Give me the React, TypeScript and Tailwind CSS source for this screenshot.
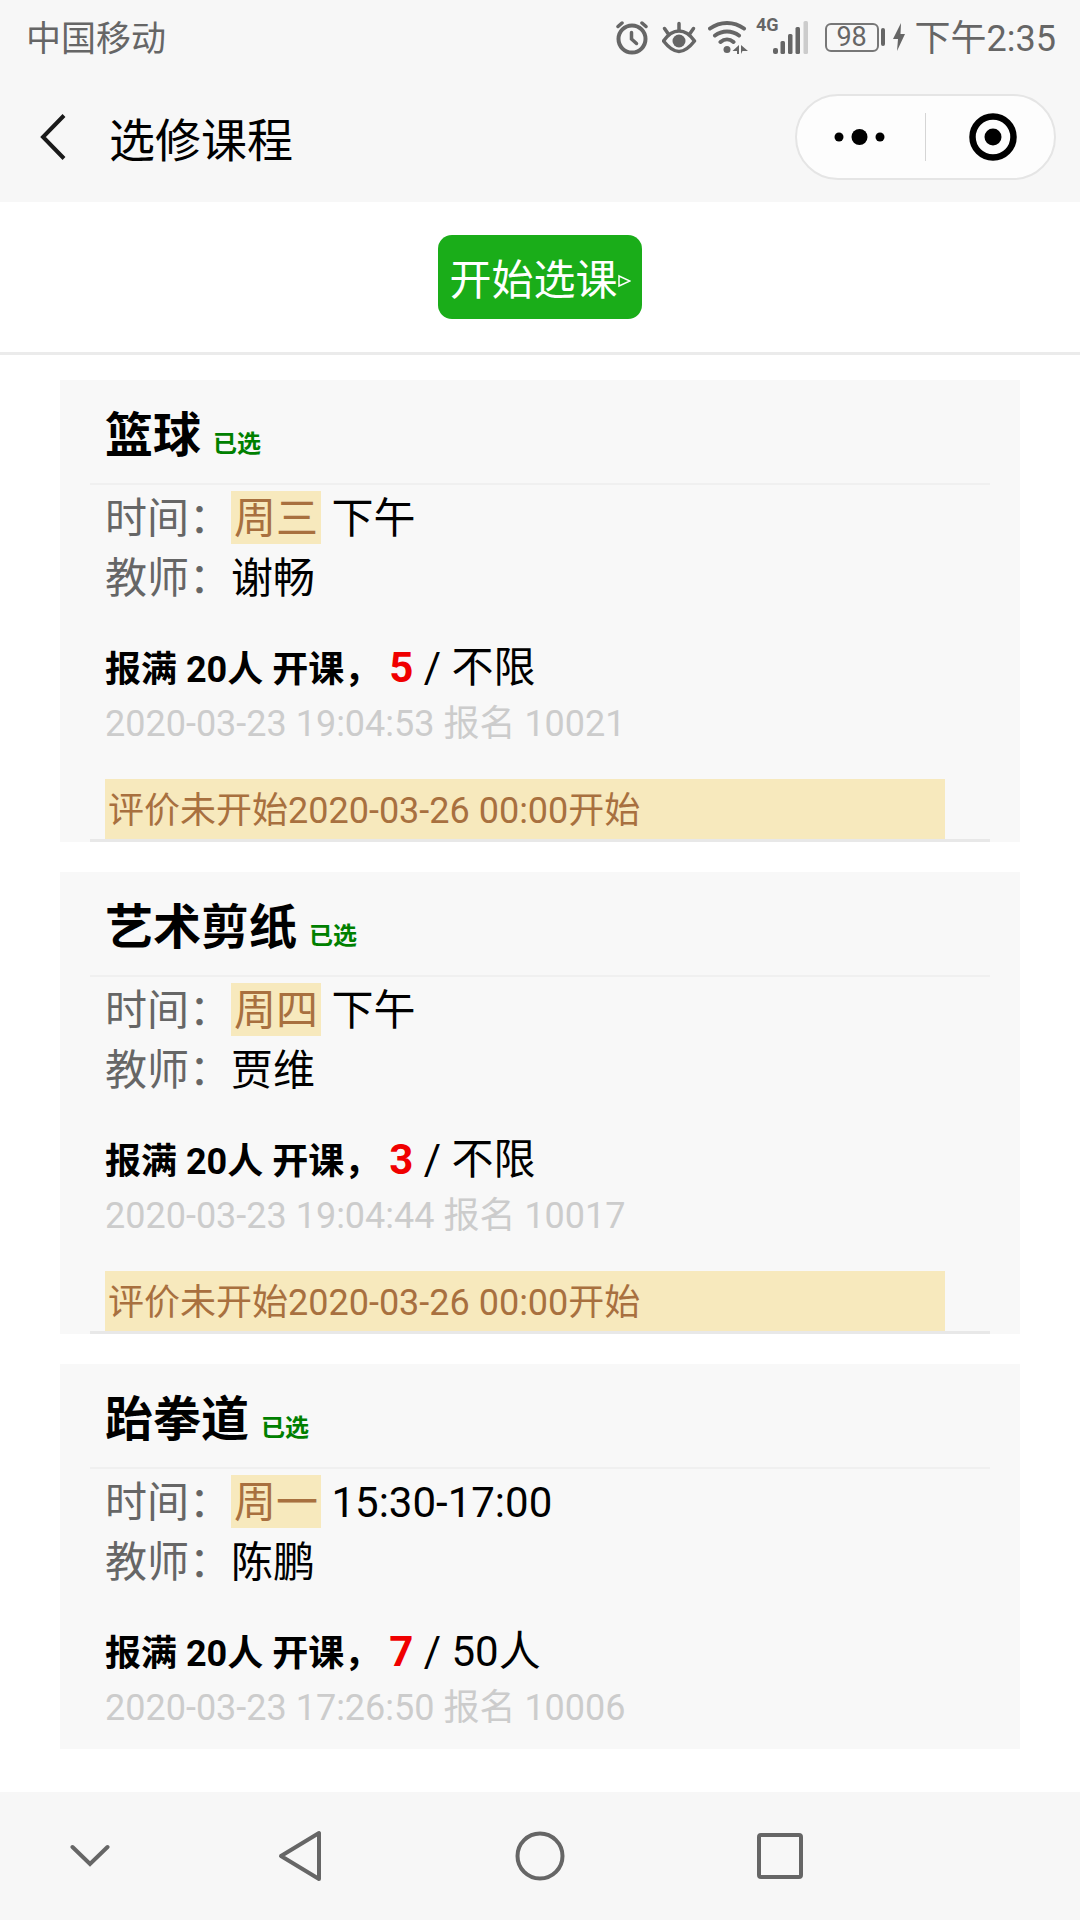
import React from 'react';

interface Course {
  name: string;
  day: string;
  time: string;
  teacher: string;
  joined: number;
  limit: string;
  signup: string;
  notice?: string;
}

const courses: Course[] = [
  {
    name: '篮球',
    day: '周三',
    time: '下午',
    teacher: '谢畅',
    joined: 5,
    limit: '不限',
    signup: '2020-03-23 19:04:53 报名 10021',
    notice: '评价未开始2020-03-26 00:00开始',
  },
  {
    name: '艺术剪纸',
    day: '周四',
    time: '下午',
    teacher: '贾维',
    joined: 3,
    limit: '不限',
    signup: '2020-03-23 19:04:44 报名 10017',
    notice: '评价未开始2020-03-26 00:00开始',
  },
  {
    name: '跆拳道',
    day: '周一',
    time: '15:30-17:00',
    teacher: '陈鹏',
    joined: 7,
    limit: '50人',
    signup: '2020-03-23 17:26:50 报名 10006',
  },
];

const StatusBar: React.FC = () => (
  <div className="flex h-[74px] items-center justify-between px-6 text-[36px] leading-[40px] text-[#666]">
    <span className="pt-1.5 pl-0.5 text-[35px]">中国移动</span>
    <div className="flex items-center">
      {/* Alarm */}
      <svg className="mr-3" width="34" height="36" viewBox="0 0 34 36" fill="none" stroke="currentColor" strokeWidth="4" strokeLinecap="round">
        <circle cx="16" cy="20" r="13.5" />
        <path d="M15.5 13.500v6.500l5 4.500" strokeWidth="3.5" />
        <path d="M2 7.500 6 4M30 7.500 26 4" strokeWidth="3.5" />
      </svg>
      {/* Eye comfort */}
      <svg className="mr-2.5" width="36" height="36" viewBox="0 0 36 36" fill="none" stroke="currentColor" strokeWidth="3.5" strokeLinecap="round">
        <path d="M1.500 22C7 14 12 12 17 12s10 2 15.500 10C27 29 22 32.500 17 32.500S7 29 1.500 22Z" strokeLinejoin="round" />
        <circle cx="17" cy="22" r="6.5" fill="currentColor" stroke="none" />
        <path d="M17 4.5V11M2.500 9.500l3.500 5M31.500 9.500l-3.500 5" />
      </svg>
      {/* Wi-Fi with data arrows */}
      <svg className="mr-2" width="40" height="36" viewBox="0 0 40 36" fill="none" stroke="currentColor" strokeWidth="4" strokeLinecap="round">
        <path d="M2 9.500C12 2 26 2 36 9.500M7 16.500c7-5.500 17-5.500 24 0M12.500 23c4-3.500 9-3.500 13 0" />
        <circle cx="19" cy="30.500" r="3.500" fill="currentColor" stroke="none" />
        <path d="M31 26v9h-2v-3h-4.500zM33 26v9l1.500-3H40z" fill="currentColor" stroke="none" />
      </svg>
      <span className="-mr-1.5 self-start text-[18px] leading-[20px] font-bold">4G</span>
      {/* Signal */}
      <svg className="mr-4" width="36" height="36" viewBox="0 0 36 36" fill="currentColor">
        <rect x="0" y="29" width="5" height="6" rx="2" />
        <rect x="7.500" y="22" width="4.500" height="13" rx="1.500" />
        <rect x="15" y="15" width="4.500" height="20" rx="1.500" />
        <rect x="22.500" y="8" width="4.500" height="27" rx="1.500" />
        <rect x="30.500" y="2" width="4.500" height="33" rx="1.500" fill="#ccc" />
      </svg>
      <span className="flex h-[29px] w-[54px] items-center justify-center rounded-[6px] border-2 border-[#777] text-[27px]">98</span>
      <span className="mr-2 ml-0.5 h-[18px] w-[4px] rounded-full bg-[#666]" />
      <svg className="mr-2.5" width="12" height="28" viewBox="0 0 12 28" fill="currentColor">
        <path d="M8 0 0 16h5L4 28l8-17H7.500z" />
      </svg>
      <span className="pt-1">下午2:35</span>
    </div>
  </div>
);

const TitleBar: React.FC = () => (
  <div className="flex h-[128px] items-center pr-6 pb-0.5 pl-8">
    <button type="button" aria-label="返回" className="flex h-16 w-[77px] items-center pl-2">
      <svg width="26" height="46" viewBox="0 0 26 46" fill="none" stroke="#1a1a1a" strokeWidth="4">
        <path d="M24 1.500 3 23l21 21.500" />
      </svg>
    </button>
    <h1 className="pt-2 text-[46px] leading-[60px]">选修课程</h1>
    {/* Mini program capsule */}
    <div className="ml-auto flex h-[86px] w-[261px] items-center rounded-full border-2 border-[#e5e5e5] bg-[#fdfdfd]">
      <button type="button" aria-label="更多" className="flex h-full flex-1 items-center justify-center">
        <svg className="mr-0.5" width="52" height="18" viewBox="0 0 52 18">
          <circle cx="5" cy="9" r="4.500" />
          <circle cx="25.500" cy="9" r="8" />
          <circle cx="46" cy="9" r="4.500" />
        </svg>
      </button>
      <span className="h-12 w-px bg-[#d5d5d5]" />
      <button type="button" aria-label="关闭" className="flex h-full flex-1 items-center justify-center">
        <svg className="ml-1.5" width="48" height="48" viewBox="0 0 48 48">
          <circle cx="24" cy="24" r="20.500" fill="none" stroke="#000" strokeWidth="6.500" />
          <circle cx="24" cy="24" r="8.500" />
        </svg>
      </button>
    </div>
  </div>
);

const CourseCard: React.FC<{ course: Course }> = ({ course }) => (
  <article className="bg-[#f8f8f8] px-[30px]">
    <header className="flex h-[105px] items-baseline gap-3 border-b-2 border-[#f0f0f0] px-[15px] pt-[23px]">
      <h2 className="text-[48px] leading-[66px] font-bold">{course.name}</h2>
      <span className="text-[24px] font-bold text-[#008000]">已选</span>
    </header>
    <div className="px-[15px] pt-1 text-[42px] leading-[60px]">
      <p>
        <span className="text-[#666]">时间：</span>
        <span className="bg-[#f7e9bd] px-[3px] pt-[3px] pb-px text-[#a8703f]">{course.day}</span> {course.time}
      </p>
      <p>
        <span className="text-[#666]">教师：</span>
        {course.teacher}
      </p>
      <p className="mt-8 leading-[54px]">
        <b className="text-[36px]">报满 20人 开课， </b>
        <b className="text-[#f00000]">{course.joined}</b> / {course.limit}
      </p>
      <p className="pb-[14px] text-[36px] leading-[54px] text-[#ccc]">{course.signup}</p>
      {course.notice && (
        <p className="mt-[14px] mr-[30px] bg-[#f7e9bd] px-[3px] pt-1 text-[36px] leading-[56px] text-[#a8703f]">{course.notice}</p>
      )}
    </div>
    {course.notice && <hr className="border-t-3 border-[#e8e8e8]" />}
  </article>
);

const SystemNav: React.FC = () => (
  <nav className="grid h-32 grid-cols-[3fr_4fr_4fr_4fr_3fr] bg-[#f7f7f7] text-[#666]">
    <button type="button" aria-label="收起" className="flex items-center justify-center">
      <svg width="40" height="24" viewBox="0 0 40 24" fill="none" stroke="currentColor" strokeWidth="4" strokeLinecap="round">
        <path d="m2.500 3 17.500 17L37.500 3" />
      </svg>
    </button>
    <button type="button" aria-label="后退" className="flex items-center justify-center">
      <svg width="44" height="52" viewBox="0 0 44 52" fill="none" stroke="currentColor" strokeWidth="4" strokeLinejoin="round">
        <path d="M41 3v46L3 26z" />
      </svg>
    </button>
    <button type="button" aria-label="主屏幕" className="flex items-center justify-center">
      <svg width="50" height="50" viewBox="0 0 50 50" fill="none" stroke="currentColor" strokeWidth="4">
        <circle cx="25" cy="25" r="22.500" />
      </svg>
    </button>
    <button type="button" aria-label="最近任务" className="flex items-center justify-center">
      <svg width="46" height="46" viewBox="0 0 46 46" fill="none" stroke="currentColor" strokeWidth="4">
        <rect x="2" y="2" width="42" height="42" rx="2" />
      </svg>
    </button>
  </nav>
);

export default function App() {
  return (
    <div className="flex min-h-screen flex-col bg-white font-['Roboto','Noto_Sans_CJK_SC',sans-serif] text-black" lang="zh-CN">
      <div className="bg-[#f7f7f7]">
        <StatusBar />
        <TitleBar />
      </div>

      <main className="flex-1 pb-8">
        <div className="flex justify-center border-b-3 border-[#ebebeb] py-[33px]">
          <button type="button" className="flex h-[84px] items-center rounded-[14px] bg-[#1aad19] px-[11px] pt-2 text-[42px] leading-[60px] text-white">
            开始选课
            <svg width="13" height="14" viewBox="0 0 13 14" fill="none" stroke="currentColor" strokeWidth="1.500">
              <path d="M1 2v10l11-5z" />
            </svg>
          </button>
        </div>
        <div className="mx-[60px] mt-[25px] flex flex-col gap-[30px]">
          {courses.map((course) => (
            <CourseCard key={course.name} course={course} />
          ))}
        </div>
      </main>

      <SystemNav />
    </div>
  );
}
